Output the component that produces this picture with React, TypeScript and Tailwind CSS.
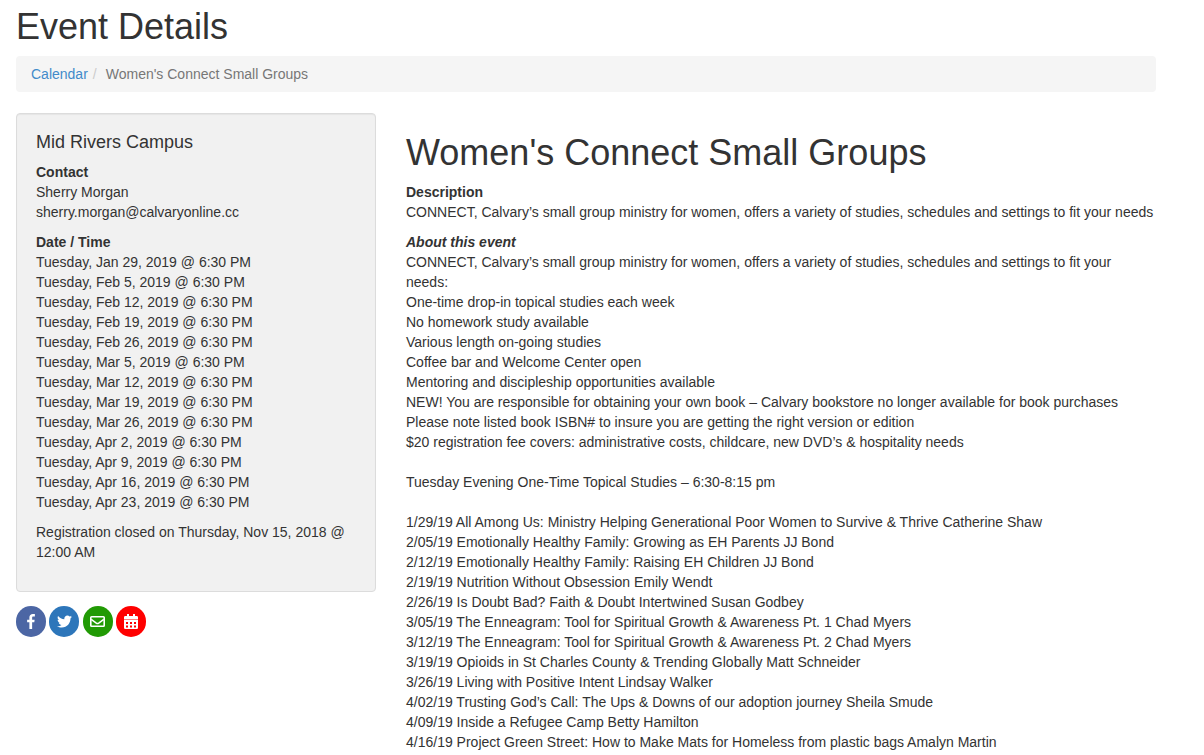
import React from "react";
import { FaTwitter } from "react-icons/fa";

const dates = [
  "Jan 29", "Feb 5", "Feb 12", "Feb 19", "Feb 26", "Mar 5", "Mar 12",
  "Mar 19", "Mar 26", "Apr 2", "Apr 9", "Apr 16", "Apr 23",
];

const about = [
  "CONNECT, Calvary’s small group ministry for women, offers a variety of studies, schedules and settings to fit your needs:",
  "One-time drop-in topical studies each week",
  "No homework study available",
  "Various length on-going studies",
  "Coffee bar and Welcome Center open",
  "Mentoring and discipleship opportunities available",
  "NEW! You are responsible for obtaining your own book – Calvary bookstore no longer available for book purchases",
  "Please note listed book ISBN# to insure you are getting the right version or edition",
  "$20 registration fee covers: administrative costs, childcare, new DVD’s & hospitality needs",
];

const studies = [
  "1/29/19 All Among Us: Ministry Helping Generational Poor Women to Survive & Thrive Catherine Shaw",
  "2/05/19 Emotionally Healthy Family: Growing as EH Parents JJ Bond",
  "2/12/19 Emotionally Healthy Family: Raising EH Children JJ Bond",
  "2/19/19 Nutrition Without Obsession Emily Wendt",
  "2/26/19 Is Doubt Bad? Faith & Doubt Intertwined Susan Godbey",
  "3/05/19 The Enneagram: Tool for Spiritual Growth & Awareness Pt. 1 Chad Myers",
  "3/12/19 The Enneagram: Tool for Spiritual Growth & Awareness Pt. 2 Chad Myers",
  "3/19/19 Opioids in St Charles County & Trending Globally Matt Schneider",
  "3/26/19 Living with Positive Intent Lindsay Walker",
  "4/02/19 Trusting God’s Call: The Ups & Downs of our adoption journey Sheila Smude",
  "4/09/19 Inside a Refugee Camp Betty Hamilton",
  "4/16/19 Project Green Street: How to Make Mats for Homeless from plastic bags Amalyn Martin",
];

function FacebookIcon() {
  return (
    <svg width="8" height="15" viewBox="0 0 264 512" fill="currentColor" aria-hidden="true">
      <path d="M76.7 512V283H0v-91h76.7v-71.7C76.7 42.4 124.3 0 193.8 0c33.3 0 61.9 2.5 70.2 3.6V85h-48.2c-37.8 0-45.1 18-45.1 44.3V192H256l-11.7 91h-73.6v229" />
    </svg>
  );
}

function TwitterIcon() {
  return <FaTwitter size={15} aria-hidden="true" />;
}

function EnvelopeIcon() {
  return (
    <svg width="15" height="11" viewBox="0 0 15 11" fill="none" stroke="currentColor" aria-hidden="true">
      <rect x="0.8" y="0.8" width="13.4" height="9.4" rx="0.8" strokeWidth="1.6" />
      <path d="M1.2 3.4 6.3 7.2Q7.5 8 8.7 7.2L13.8 3.4" strokeWidth="1.5" />
    </svg>
  );
}

function CalendarIcon() {
  return (
    <svg width="14" height="15" viewBox="0 0 14 15" fill="currentColor" fillRule="evenodd" aria-hidden="true">
      <path d="M3 0h2v2h4V0h2v2h1.7q1.3 0 1.3 1.3V5H0V3.300Q0 2 1.300 2H3z" />
      <path d="M0 5.600h14v8.100q0 1.300-1.300 1.300H1.300Q0 15 0 13.700zM2 8v2h2V8zM6 8v2h2V8zM10 8v2h2V8zM2 11.500v2h2v-2zM6 11.500v2h2v-2zM10 11.500v2h2v-2z" />
    </svg>
  );
}

const shares = [
  { label: "Share on Facebook", color: "bg-[#4c66a4]", Icon: FacebookIcon },
  { label: "Share on Twitter", color: "bg-[#2d76ba]", Icon: TwitterIcon },
  { label: "Share by email", color: "bg-[#219a04]", Icon: EnvelopeIcon },
  { label: "Add to calendar", color: "bg-[#ff0000]", Icon: CalendarIcon },
];

export default function App() {
  return (
    <div className="pl-4 pr-12 pt-[7px] font-['Liberation_Sans',Arial,sans-serif] text-sm leading-5 text-[#333333]">
      <h1 className="text-4xl leading-10">Event Details</h1>
      <nav aria-label="Breadcrumb" className="mt-[9px] rounded bg-[#f5f5f5] px-[15px] py-2">
        <ol className="flex">
          <li><a href="#" className="text-[#428bca]">Calendar</a></li>
          <li className="px-[5px] text-[#cccccc]" aria-hidden="true">/</li>
          <li className="pl-1 text-[#777777]">Women's Connect Small Groups</li>
        </ol>
      </nav>
      <div className="mt-[21px] flex gap-[30px]">
        <aside className="w-[360px] shrink-0">
          <section className="rounded border border-[#dcdcdc] bg-[#f1f1f1] px-[19px] pb-[29px] pt-[18px] shadow-[inset_0_1px_1px_rgba(0,0,0,0.05)]">
            <h2 className="mb-2.5 text-lg leading-5">Mid Rivers Campus</h2>
            <div className="mb-2.5">
              <h3 className="font-bold">Contact</h3>
              <p>Sherry Morgan</p>
              <p>sherry.morgan@calvaryonline.cc</p>
            </div>
            <div className="mb-2.5">
              <h3 className="font-bold">Date / Time</h3>
              <ul>
                {dates.map((d) => (
                  <li key={d}>Tuesday, {d}, 2019 @ 6:30 PM</li>
                ))}
              </ul>
            </div>
            <p>Registration closed on Thursday, Nov 15, 2018 @ 12:00 AM</p>
          </section>
          <div className="mt-3.5 flex w-[130px] justify-between">
            {shares.map(({ label, color, Icon }) => (
              <a key={label} href="#" aria-label={label} className={`flex h-[31px] w-[30px] items-center justify-center rounded-full text-white ${color}`}>
                <Icon />
              </a>
            ))}
          </div>
        </aside>
        <main className="min-w-0 flex-1 pt-5">
          <h1 className="mb-[9px] text-4xl leading-10">Women's Connect Small Groups</h1>
          <h2 className="font-bold">Description</h2>
          <p className="mb-2.5">CONNECT, Calvary’s small group ministry for women, offers a variety of studies, schedules and settings to fit your needs</p>
          <h2 className="font-bold italic">About this event</h2>
          {about.map((line) => <p key={line}>{line}</p>)}
          <p className="my-5">Tuesday Evening One-Time Topical Studies – 6:30-8:15 pm</p>
          {studies.map((line) => <p key={line}>{line}</p>)}
        </main>
      </div>
    </div>
  );
}
